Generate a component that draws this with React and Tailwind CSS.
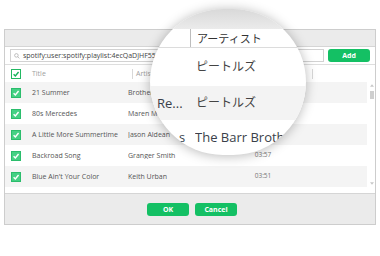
import React from 'react';

const rows = [
  { title: '21 Summer', artist: 'Brothers Osborne', time: '03:24' },
  { title: '80s Mercedes', artist: 'Maren Morris', time: '03:47' },
  { title: 'A Little More Summertime', artist: 'Jason Aldean', time: '04:01' },
  { title: 'Backroad Song', artist: 'Granger Smith', time: '03:57' },
  { title: "Blue Ain't Your Color", artist: 'Keith Urban', time: '03:51' },
];

// small check mark used by all boxes
const Check = ({ color }) => (
  <svg viewBox="0 0 10 10" className="w-full h-full">
    <path d="M2 5.2 L4.2 7.4 L8.2 2.6" fill="none" stroke={color} strokeWidth="1.8" />
  </svg>
);

const Box = ({ header }) =>
  header ? (
    <div className="w-[10px] h-[10px] border border-[#22b862] bg-white">
      <Check color="#16b35a" />
    </div>
  ) : (
    <div className="w-[10px] h-[10px] border border-[#2bbd6c] bg-[#45d084]">
      <Check color="#ffffff" />
    </div>
  );

const GreenButton = ({ children, className }) => (
  <button
    className={`h-[13px] rounded-[3px] bg-[#14c064] text-white text-[7px] font-bold leading-none flex items-center justify-center ${className}`}
  >
    {children}
  </button>
);

const Magnifier = () => (
  <div className="absolute left-[150px] top-[9px] w-[156px] h-[146px] rounded-full overflow-hidden bg-white shadow-[0_1px_12px_rgba(0,0,0,0.28)] font-['Open_Sans','Noto_Sans_CJK_JP',sans-serif]">
    {/* magnified title bar */}
    <div className="h-[20px] bg-linear-to-b from-[#d9d9d9] to-[#ebebeb]" />
    {/* header */}
    <div className="h-[19px] flex items-center border-b border-[#dcdcdc]">
      <div className="w-[40px] h-full" />
      <div className="w-px h-full bg-[#bdbdbd]" />
      <span className="ml-[6px] text-[11px] text-[#333] leading-none">アーティスト</span>
    </div>
    <div className="h-[38px] flex items-center">
      <div className="w-[41px]" />
      <span className="ml-[5px] text-[12px] text-[#444] leading-none">ピートルズ</span>
    </div>
    <div className="h-[34px] flex items-center bg-[#f3f3f3]">
      <span className="ml-[7px] w-[34px] text-[13px] text-[#3a3f4a] leading-none">Re...</span>
      <span className="ml-[5px] text-[12px] text-[#444] leading-none">ピートルズ</span>
    </div>
    <div className="h-[35px] flex items-center">
      <span className="ml-[29px] w-[12px] text-[13px] text-[#3a3f4a] leading-none">s</span>
      <span className="ml-[4px] w-[88px] overflow-hidden whitespace-nowrap text-[13px] text-[#3a3f4a] leading-none">
        The Barr Brothers
      </span>
    </div>
  </div>
);

export default function App() {
  return (
    <div className="relative w-[380px] h-[256px] bg-white overflow-hidden font-['Open_Sans',sans-serif]">
      <div className="pt-[29px] pl-[4px]">
        <div className="w-[372px] border border-[#cdcdcd] bg-white">
          {/* title bar */}
          <div className="h-[17px] bg-[#ebebeb] border-b border-[#d5d5d5]" />

          {/* search row */}
          <div className="h-[17px] flex items-center px-[5px] gap-[4px]">
            <div className="flex-1 h-[13px] border border-[#d2d2d2] flex items-center px-[3px] gap-[3px]">
              <svg viewBox="0 0 10 10" className="w-[6px] h-[6px]">
                <circle cx="4" cy="4" r="3" fill="none" stroke="#999" strokeWidth="1" />
                <path d="M6.2 6.2 L9 9" stroke="#999" strokeWidth="1" />
              </svg>
              <span className="text-[7px] text-[#444] leading-none whitespace-nowrap">
                spotify:user:spotify:playlist:4ecQaDJHF55
              </span>
            </div>
            <GreenButton className="w-[42px]">Add</GreenButton>
          </div>

          {/* table header */}
          <div className="h-[18px] border-t border-[#dedede] flex items-center">
            <div className="w-[27px] pl-[6px]">
              <Box header />
            </div>
            <div className="w-[100px] text-[7px] text-[#a0a0a0] leading-none">Title</div>
            <div className="w-px h-[10px] bg-[#d8d8d8]" />
            <div className="w-[179px] pl-[3px] text-[7px] text-[#a0a0a0] leading-none">Artist</div>
            <div className="w-px h-[10px] bg-[#d8d8d8]" />
          </div>

          {/* rows + scrollbar */}
          <div className="flex">
            <div className="w-[362px]">
              {rows.map((r, i) => (
                <div
                  key={r.title}
                  className={`h-[21px] flex items-center text-[7px] text-[#555] leading-none ${
                    i % 2 === 0 ? 'bg-[#f4f4f4]' : 'bg-white'
                  }`}
                >
                  <div className="w-[27px] pl-[6px]">
                    <Box />
                  </div>
                  <div className="w-[96px] whitespace-nowrap">{r.title}</div>
                  <div className="w-[100px] whitespace-nowrap overflow-hidden">{r.artist}</div>
                  <div className="w-[70px] text-center text-[6.5px] text-[#777]">{r.time}</div>
                </div>
              ))}
            </div>
            <div className="ml-[2px] w-[6px] flex flex-col items-center pt-[2px]">
              <svg viewBox="0 0 6 4" className="w-[4px] h-[3px]">
                <path d="M0 4 L3 0 L6 4 Z" fill="#c8c8c8" />
              </svg>
              <div className="mt-[4px] w-[4px] h-[8px] bg-[#cfcfcf]" />
              <div className="flex-1" />
              <svg viewBox="0 0 6 4" className="w-[4px] h-[3px] mb-[2px]">
                <path d="M0 0 L6 0 L3 4 Z" fill="#c8c8c8" />
              </svg>
            </div>
          </div>
          <div className="h-[6px]" />

          {/* footer */}
          <div className="h-[31px] bg-[#ebebeb] border-t border-[#d5d5d5] flex items-center justify-center gap-[6px] pl-[4px]">
            <GreenButton className="w-[42px]">OK</GreenButton>
            <GreenButton className="w-[42px]">Cancel</GreenButton>
          </div>
        </div>
      </div>

      <Magnifier />
    </div>
  );
}
